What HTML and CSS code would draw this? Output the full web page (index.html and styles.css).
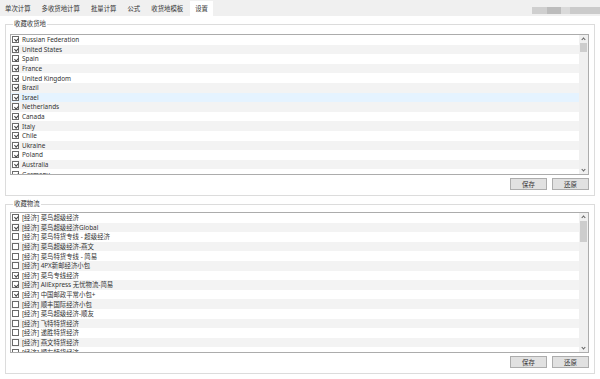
FILE: index.html
```html
<!DOCTYPE html>
<html>
<head>
    <link rel="stylesheet" href="styles.css">
</head>
<body>
    <div class="tab-bar">
        <div class="tab">单次计算</div>
        <div class="tab">多收货地计算</div>
        <div class="tab">批量计算</div>
        <div class="tab">公式</div>
        <div class="tab">收货地模板</div>
        <div class="tab active">设置</div>
        <div class="tab-fill"></div>
        <div class="tab-scroll">
            <span class="seg s1"></span><span class="seg s2"></span><span class="seg s3"></span><span class="seg s4"></span>
        </div>
    </div>

    <div class="page">
        <fieldset class="group first">
            <legend>收藏收货地</legend>
            <div class="list">
                <div class="rows" id="countryRows"></div>
                <div class="scrollbar">
                    <div class="arrow up"></div>
                    <div class="thumb" style="height: 9px;"></div>
                    <div class="track"></div>
                    <div class="arrow down"></div>
                </div>
            </div>
            <div class="actions">
                <button class="btn">保存</button>
                <button class="btn">还原</button>
            </div>
        </fieldset>

        <fieldset class="group second">
            <legend>收藏物流</legend>
            <div class="list">
                <div class="rows" id="shipRows"></div>
                <div class="scrollbar">
                    <div class="arrow up"></div>
                    <div class="thumb" style="height: 21px;"></div>
                    <div class="track"></div>
                    <div class="arrow down"></div>
                </div>
            </div>
            <div class="actions">
                <button class="btn">保存</button>
                <button class="btn">还原</button>
            </div>
        </fieldset>
    </div>

  <script>
    const countries = [
      'Russian Federation', 'United States', 'Spain', 'France', 'United Kingdom',
      'Brazil', 'Israel', 'Netherlands', 'Canada', 'Italy', 'Chile', 'Ukraine',
      'Poland', 'Australia', 'Germany'
    ].map(name => ({ name, checked: true }));

    const shipping = [
      ['菜鸟超级经济', true],
      ['菜鸟超级经济Global', true],
      ['菜鸟特货专线 - 超级经济', false],
      ['菜鸟超级经济-燕文', false],
      ['菜鸟特货专线 - 简易', false],
      ['4PX新邮经济小包', false],
      ['菜鸟专线经济', true],
      ['AliExpress 无忧物流-简易', true],
      ['中国邮政平常小包+', true],
      ['顺丰国际经济小包', false],
      ['菜鸟超级经济-顺友', false],
      ['飞特特货经济', false],
      ['递胜特货经济', false],
      ['燕文特货经济', false],
      ['顺友特货经济', false]
    ].map(([name, checked]) => ({ name: '[经济] ' + name, checked }));

    function fillRows(id, items, hoverIndex) {
      const el = document.getElementById(id);
      items.forEach((item, index) => {
        const row = document.createElement('div');
        row.className = 'row' + (index === hoverIndex ? ' hover' : '');
        const box = document.createElement('span');
        box.className = 'cb' + (item.checked ? ' checked' : '');
        const label = document.createElement('span');
        label.className = 'label';
        label.textContent = item.name;
        row.appendChild(box);
        row.appendChild(label);
        el.appendChild(row);
      });
    }

    fillRows('countryRows', countries, 6);
    fillRows('shipRows', shipping, -1);
  </script>
</body>
</html>
```

FILE: styles.css
```css
* {
    margin: 0;
    padding: 0;
    box-sizing: border-box;
}

body {
    width: 600px;
    height: 379px;
    overflow: hidden;
    background: #f0f0f0;
    font-family: "Noto Sans", "Noto Sans CJK SC", sans-serif;
    font-size: 6.4px;
    color: #333333;
}

.tab-bar {
    display: flex;
    align-items: flex-end;
    height: 16px;
}

.tab {
    height: 15px;
    line-height: 15px;
    padding: 0 5px;
    margin-right: 1px;
    white-space: nowrap;
}

.tab.active {
    background: #ffffff;
    margin-left: 1px;
}

.tab-fill {
    flex: 1;
}

.tab-scroll {
    display: flex;
    align-self: flex-start;
    margin-top: 7px;
    height: 7px;
}

.seg {
    display: block;
    height: 7px;
}

.s1 { width: 15px; background: #cfcfcf; }
.s2 { width: 14px; background: #bcbcbc; }
.s3 { width: 9px; background: #dadada; }
.s4 { width: 30px; background: #cbcbcb; }

.page {
    background: #ffffff;
    height: 363px;
    padding: 4px 5px 0 5px;
    display: flex;
    flex-direction: column;
}

.group {
    border: 1px solid #dcdcdc;
    padding: 0 5px 5px 4px;
    min-width: 0;
}

.group legend {
    line-height: 8px;
    padding: 0 1px;
    margin-left: 3px;
}

.group.first .list {
    margin-top: 6px;
}

.group.second {
    margin-top: 4px;
}

.group.second .list {
    margin-top: 4px;
}

.list {
    display: flex;
    height: 141px;
    border: 1px solid #acacac;
    background: #ffffff;
}

.rows {
    flex: 1;
    overflow: hidden;
}

.row {
    display: flex;
    align-items: center;
    height: 9.6px;
    padding-left: 1px;
    white-space: nowrap;
}

.row:nth-child(even) {
    background: #f3f3f3;
}

.row.hover {
    background: #e5f3ff;
}

.cb {
    position: relative;
    width: 7px;
    height: 7px;
    border: 1px solid #6a6a6a;
    background: #ffffff;
    margin-right: 3px;
    flex-shrink: 0;
}

.cb.checked::after {
    content: "";
    position: absolute;
    left: 1.6px;
    top: 0.2px;
    width: 1.6px;
    height: 3.2px;
    border-right: 0.8px solid #444444;
    border-bottom: 0.8px solid #444444;
    transform: rotate(45deg);
}

.scrollbar {
    width: 9px;
    background: #f0f0f0;
    display: flex;
    flex-direction: column;
}

.arrow {
    height: 8px;
    position: relative;
}

.arrow::after {
    content: "";
    position: absolute;
    left: 3px;
    width: 2px;
    height: 2px;
    border-left: 1px solid #606060;
    border-top: 1px solid #606060;
}

.arrow.up::after {
    top: 3px;
    transform: rotate(45deg);
}

.arrow.down::after {
    top: 2px;
    transform: rotate(-135deg);
}

.thumb {
    background: #cdcdcd;
    margin: 0 1px;
}

.track {
    flex: 1;
}

.actions {
    display: flex;
    justify-content: flex-end;
    gap: 5px;
    margin-top: 3px;
}

.btn {
    width: 37px;
    height: 12px;
    border: 1px solid #adadad;
    background: #e1e1e1;
    font-family: inherit;
    font-size: 6.4px;
    color: #333333;
}
```
